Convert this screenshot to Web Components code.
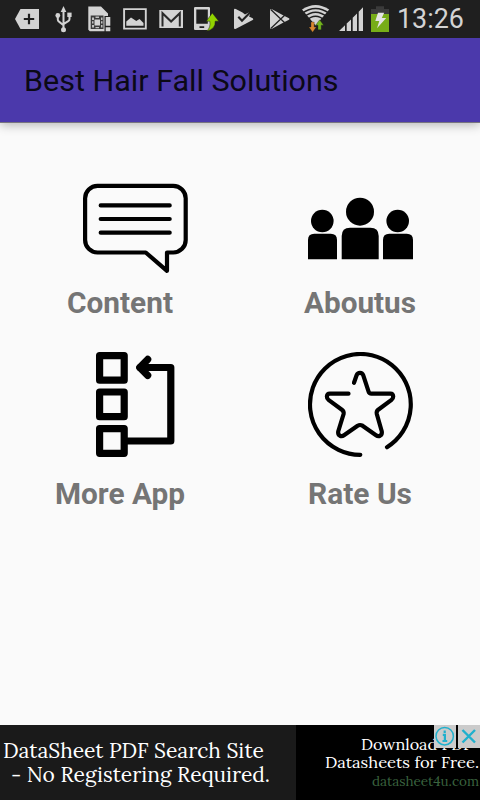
<!DOCTYPE html>
<html lang="en">
<head>
<meta charset="utf-8">
<title>Best Hair Fall Solutions</title>
<style>
  html, body {
    margin: 0;
    height: 100%;
  }

  body {
    overflow: hidden;
    font-family: Roboto, "Liberation Sans", sans-serif;
  }
</style>
</head>
<body>
<hair-app></hair-app>

<script>
const define = (name, html, setup) => {
  const template = window.document.createElement('template');
  template.innerHTML = html;

  customElements.define(name, class extends HTMLElement {
    constructor() {
      super();
      this.attachShadow({mode: 'open'}).append(template.content.cloneNode(true));
    }

    connectedCallback() {
      if (setup) {
        setup(this, this.shadowRoot);
      }
    }
  });
};

const TILE_ICONS = {
  content: `
    <g fill="none" stroke="#000" stroke-width="4.2" stroke-linecap="round" stroke-linejoin="round">
      <path d="M62.7 76.5H14.5A12.5 12.5 0 0 1 2.1 64V22.2A12.5 12.5 0 0 1 14.5 9.8H90.2A12.5 12.5 0 0 1 102.7 22.2V64A12.5 12.5 0 0 1 90.2 76.5H84V94.8Z"/>
      <path d="M17.7 29.4H86.7M17.7 43H86.7M17.7 56.7H86.7"/>
    </g>
    <path d="M65 75.5H82" stroke="#fafafa" stroke-width="0"/>`,
  people: `
    <circle cx="14.3" cy="45" r="11.3"/>
    <circle cx="52" cy="35.7" r="14"/>
    <circle cx="89.7" cy="45" r="11.3"/>
    <path d="M0 83.2V64Q0 57.7 6.3 57.7H22.7Q29 57.7 29 64V83.2Z"/>
    <path d="M33.7 83.2V60Q33.7 51.7 42 51.7H62.4Q70.7 51.7 70.7 60V83.2Z"/>
    <path d="M75 83.2V64Q75 57.7 81.3 57.7H98.7Q105 57.7 105 64V83.2Z"/>`,
  more: `
    <g fill="none" stroke="#000" stroke-width="7.2" stroke-linejoin="round" stroke-linecap="round">
      <path d="M16.6 3.6H41.2V28.2H16.6ZM16.6 40H41.2V64.7H16.6ZM16.6 76.6H41.2V101.3H16.6Z"/>
      <path d="M44 89H87.8V15.5H57"/>
      <path d="M64.7 7.4L56.8 15.5L64.7 23.4"/>
    </g>`,
  rate: `
    <g fill="none" stroke="#000" stroke-width="4.2" stroke-linecap="round" stroke-linejoin="round">
      <path d="M79 95.2A50.4 50.4 0 1 0 52.3 102.8"/>
      <path d="M46 30.8L48.6 23.2Q49.6 20.8 52 20.8Q54.4 20.8 55.2 23.2L60.6 39.7Q61.2 41.7 63.4 41.7H82.5Q85 41.7 85.2 44.5Q85.2 46.6 83.5 47.9L70.2 57.7Q68.2 59.3 68.8 62L73.8 79.5Q74.3 82.5 72.1 83.7Q70 84.6 68 83.2L54.5 73.7Q52 72.3 49.6 73.7L36 83.2Q34 84.6 31.9 83.7Q29.7 82.5 30.2 79.5L35.6 62Q36.1 59.3 33.9 57.7L20.5 47.9Q18.8 46.6 18.9 44.5Q19.1 41.7 21.8 41.7H40.5"/>
    </g>`,
};

// each entry: left edge of the cell, cell width, drawing
const STATUS_ICONS = [
  [9, 36, `
    <path d="M15 19L20.5 9H39V29H20.5Z"/>
    <path d="M29 13.8V24.2M23.8 19H34.2" stroke="#1f1f1f" stroke-width="2.2"/>`],
  [45, 36, `
    <path d="M63.5 6L66.3 12H60.7Z"/>
    <circle cx="63.5" cy="29.7" r="2.5"/><circle cx="57.8" cy="15.5" r="2.4"/><path d="M67.3 12.6H71.6V17H67.3Z"/>
    <path d="M63.5 11V29M57.8 15V19.5Q57.8 21 59 21.7L63.5 25.2M69.5 16V19Q69.5 20.3 68.2 21.2L63.5 24.2" fill="none" stroke="#d3d3d3" stroke-width="2"/>`],
  [81, 36, `
    <path d="M88.3 6.5H101L108 13.5V16H104.5V31.3H89.8L88.3 29.8Z"/>
    <path d="M90.7 15.5H103.5V29H90.7Z" fill="#3a3a3a"/>
    <path d="M94.5 19.5H100V25.5H94.5Z"/>
    <path d="M92 17.5H94V20H92ZM92 21.3H93.5V23.6H92ZM92 25H94V27.5H92ZM101 17.5H102.5V20H101ZM101 21.3H102.5V23.6H101ZM101 25H102.5V27.5H101ZM95.5 16.5H99V18H95.5ZM95.5 27H99V28.2H95.5Z" fill="#c0c0c0"/>
    <path d="M105.7 17H110.3V25.8H105.7ZM105.7 27.3H110.3V31.3H105.7Z"/>`],
  [117, 36, `
    <path d="M124.1 9.1H145.8V28.6H124.1Z" fill="none" stroke="#d3d3d3" stroke-width="1.9"/>
    <path d="M126.3 25.7V21.5L131 17.5L136.3 21L139.5 19L143.5 23V25.7Z"/>`],
  [153, 36, `
    <path d="M159.3 10H183V28H159.3Z"/>
    <path d="M162.5 26.5V13.2L171.1 21.5L179.8 13.2V26.5" fill="none" stroke="#2a2a2a" stroke-width="2"/>`],
  [189, 36, `
    <path d="M194.8 7H209.2L210 7.8V29.2L209.2 30H194.8L194 29.2V7.8ZM196.3 9.5V23.8H207.8V9.5ZM199.5 26.2V28H204.2V26.2Z" fill-rule="evenodd"/>
    <path d="M212.3 13L218.8 21.2H215.2Q215.8 29 206.5 31.2Q211 27.6 209.8 21.2H206.3Z" fill="#91d300" stroke="#1f1f1f" stroke-width=".5"/>`],
  [225, 36, `
    <path d="M234 10Q234 8.2 235.8 9.1L242.5 12.4L245 14.6L248.6 12.6L250 14.4L249 16.6L252.7 18.2Q254 19.1 252.7 20L236 28.7Q234 29.8 234 27.7Z"/>
    <path d="M238.3 16.7L242 20.8L249.8 12.8" fill="none" stroke="#222" stroke-width="2.1"/>`],
  [261, 36, `
    <path d="M270 10.5Q270 8.5 272 9.3L284 15.7L289 18.2Q290 19 289 19.8L284 22.3L272 28.7Q270 29.5 270 27.5Z"/>
    <path d="M270.8 9.5L286 24M270.8 28.5L286 14" fill="none" stroke="#222" stroke-width="1.3"/>`],
  [297, 36, `
    <path d="M302 9.6Q315.6 .4 329.2 9.6L315.6 25.5Z"/>
    <g fill="none" stroke="#1f1f1f" stroke-width="1.5">
      <path d="M302 13.4Q315.6 3.6 329.2 13.4"/>
      <path d="M304 17Q315.6 7.6 327.2 17"/>
      <path d="M306 20.9Q315.6 11.6 325.2 20.9"/>
    </g>
    <path d="M311 22H314.2V27H316.3L312.6 32.3L308.9 27H311Z" fill="#d98830" stroke="#1f1f1f" stroke-width=".3"/>
    <path d="M318 29.8V25.2H315.6L319.6 19.8L323.6 25.2H321.2V29.8Z" fill="#72b51c" stroke="#1f1f1f" stroke-width=".3"/>`],
  [333, 36, `
    <path d="M339 31L345 25.3V31ZM346.7 23.6L351 19.4V31H346.7ZM352.7 17.7L357 13.5V31H352.7ZM358.7 11.8L363 7.3V31H358.7Z"/>`],
  [369, 24, `
    <path d="M376 6.3H384V9H389V14.3H371V9H376Z" fill="#3b3b3b"/>
    <path d="M371 14H389V32H371Z" fill="#77ad18"/>
    <path d="M378 12.7H384.2L381.8 18H386.2L377 28.3L379.3 21H375.3Z" fill="#e4e4e4"/>`],
];

// One line of text stretched to an exact width.
// The y attribute is the baseline, counted from the top of the box.
define('fit-text', `
<style>
  :host {
    display: block;
    flex: none;
  }

  svg {
    display: block;
    overflow: visible;
  }
</style>
<svg><text x="0" fill="currentColor" lengthAdjust="spacingAndGlyphs"></text></svg>
`, (host, root) => {
  const svg = root.querySelector('svg');
  const text = root.querySelector('text');
  const width = host.getAttribute('width');
  svg.setAttribute('width', width);
  svg.setAttribute('height', host.getAttribute('height'));
  text.setAttribute('y', host.getAttribute('y'));
  text.setAttribute('textLength', width);
  text.setAttribute('font-size', host.getAttribute('size'));
  text.textContent = host.textContent;
});

define('status-bar', `
<style>
  :host {
    display: flex;
    box-sizing: border-box;
    height: 38px;
    padding-left: 9px;
    background: #1f1f1f;
    color: #d3d3d3;
    z-index: 1;
  }

  #icons {
    display: flex;
    margin-right: 4px;
    fill: #d3d3d3;
  }
</style>
<div id="icons"></div>
<fit-text width="67" height="38" y="28" size="27">13:26</fit-text>
`, (host, root) => {
  root.querySelector('#icons').innerHTML = STATUS_ICONS.map(
    ([x, width, shapes]) => `<svg width="${width}" height="38" viewBox="${x} 0 ${width} 38">${shapes}</svg>`
  ).join('');
});

define('app-toolbar', `
<style>
  :host {
    display: block;
    box-sizing: border-box;
    height: 85px;
    padding-left: 24px;
    background: #4b39ab;
    color: #0b0916;
    border-bottom: 1px solid #77747f;
    box-shadow: 0 2px 10px rgba(0, 0, 0, 0.28);
  }
</style>
<slot></slot>
`);

define('menu-tile', `
<style>
  :host {
    display: flex;
    flex-direction: column;
    align-items: center;
    gap: var(--label-gap, 4px);
    color: #757575;
    font-weight: 700;
  }

  svg {
    display: block;
    fill: #000;
    margin-left: var(--icon-shift, 1px);
  }
</style>
<svg width="105" height="105" viewBox="0 0 105 105"></svg>
<slot></slot>
`, (host, root) => {
  root.querySelector('svg').innerHTML = TILE_ICONS[host.getAttribute('icon')];
});

define('ad-banner', `
<style>
  :host {
    display: flex;
    position: relative;
    height: 75px;
    background: #000;
    color: #fff;
    font-family: Lora, "Liberation Serif", serif;
  }

  .lead {
    width: 296px;
    background: #1a1a1a;
  }

  .lead fit-text:first-child {
    padding-left: 3px;
  }

  .lead fit-text:last-child {
    padding-left: 11px;
  }

  .offer {
    display: flex;
    flex: 1;
    flex-direction: column;
    align-items: flex-end;
    padding-right: 1px;
  }

  .offer fit-text:first-child {
    padding-right: 7px;
  }

  .link {
    color: #3a633f;
  }

  /* ad choices and close buttons lie over the offer text */
  .buttons {
    display: flex;
    gap: 2px;
    position: absolute;
    top: 0;
    right: 0;
    background: #000;
  }

  .buttons svg {
    display: block;
    background: #cbcbcb;
    fill: none;
    stroke: #20b0cd;
  }
</style>
<div class="lead">
  <fit-text width="261" height="37" y="33" size="20.6">DataSheet PDF Search Site</fit-text>
  <fit-text width="259" height="38" y="20" size="20.6">- No Registering Required.</fit-text>
</div>
<div class="offer">
  <fit-text width="111" height="28" y="25" size="16">Download PDF</fit-text>
  <fit-text width="154" height="18" y="15" size="16">Datasheets for Free.</fit-text>
  <fit-text class="link" width="107" height="18" y="15" size="13.6">datasheet4u.com</fit-text>
</div>
<div class="buttons">
  <svg width="22" height="23" viewBox="0 0 22 23">
    <circle cx="10.7" cy="11.2" r="8.7" stroke-width="1.5"/>
    <path d="M10.7 5.5V8M8.8 9.8H10.9V16M8.5 16H13.2" stroke-width="2.2"/>
  </svg>
  <svg width="22" height="23" viewBox="0 0 22 23">
    <path d="M4.5 5L17 17.5M17 5L4.5 17.5" stroke-width="2.4"/>
  </svg>
</div>
`);

define('hair-app', `
<style>
  :host {
    display: flex;
    flex-direction: column;
    width: 480px;
    height: 800px;
    background: #fafafa;
  }

  main {
    flex: 1;
    display: grid;
    grid-template-columns: 1fr 1fr;
    align-content: start;
    row-gap: 31px;
    padding-top: 53px;
  }

  .left {
    --icon-shift: 31px;
  }

  .low {
    --label-gap: 19px;
  }
</style>
<status-bar></status-bar>
<app-toolbar><fit-text width="314.6" height="84" y="53" size="30">Best Hair Fall Solutions</fit-text></app-toolbar>
<main>
  <menu-tile class="left" icon="content"><fit-text width="106" height="36" y="28" size="30">Content</fit-text></menu-tile>
  <menu-tile icon="people"><fit-text width="112" height="36" y="28" size="30">Aboutus</fit-text></menu-tile>
  <menu-tile class="left low" icon="more"><fit-text width="130" height="36" y="28" size="30">More App</fit-text></menu-tile>
  <menu-tile class="low" icon="rate"><fit-text width="104" height="36" y="28" size="30">Rate Us</fit-text></menu-tile>
</main>
<ad-banner></ad-banner>
`);
</script>
</body>
</html>
